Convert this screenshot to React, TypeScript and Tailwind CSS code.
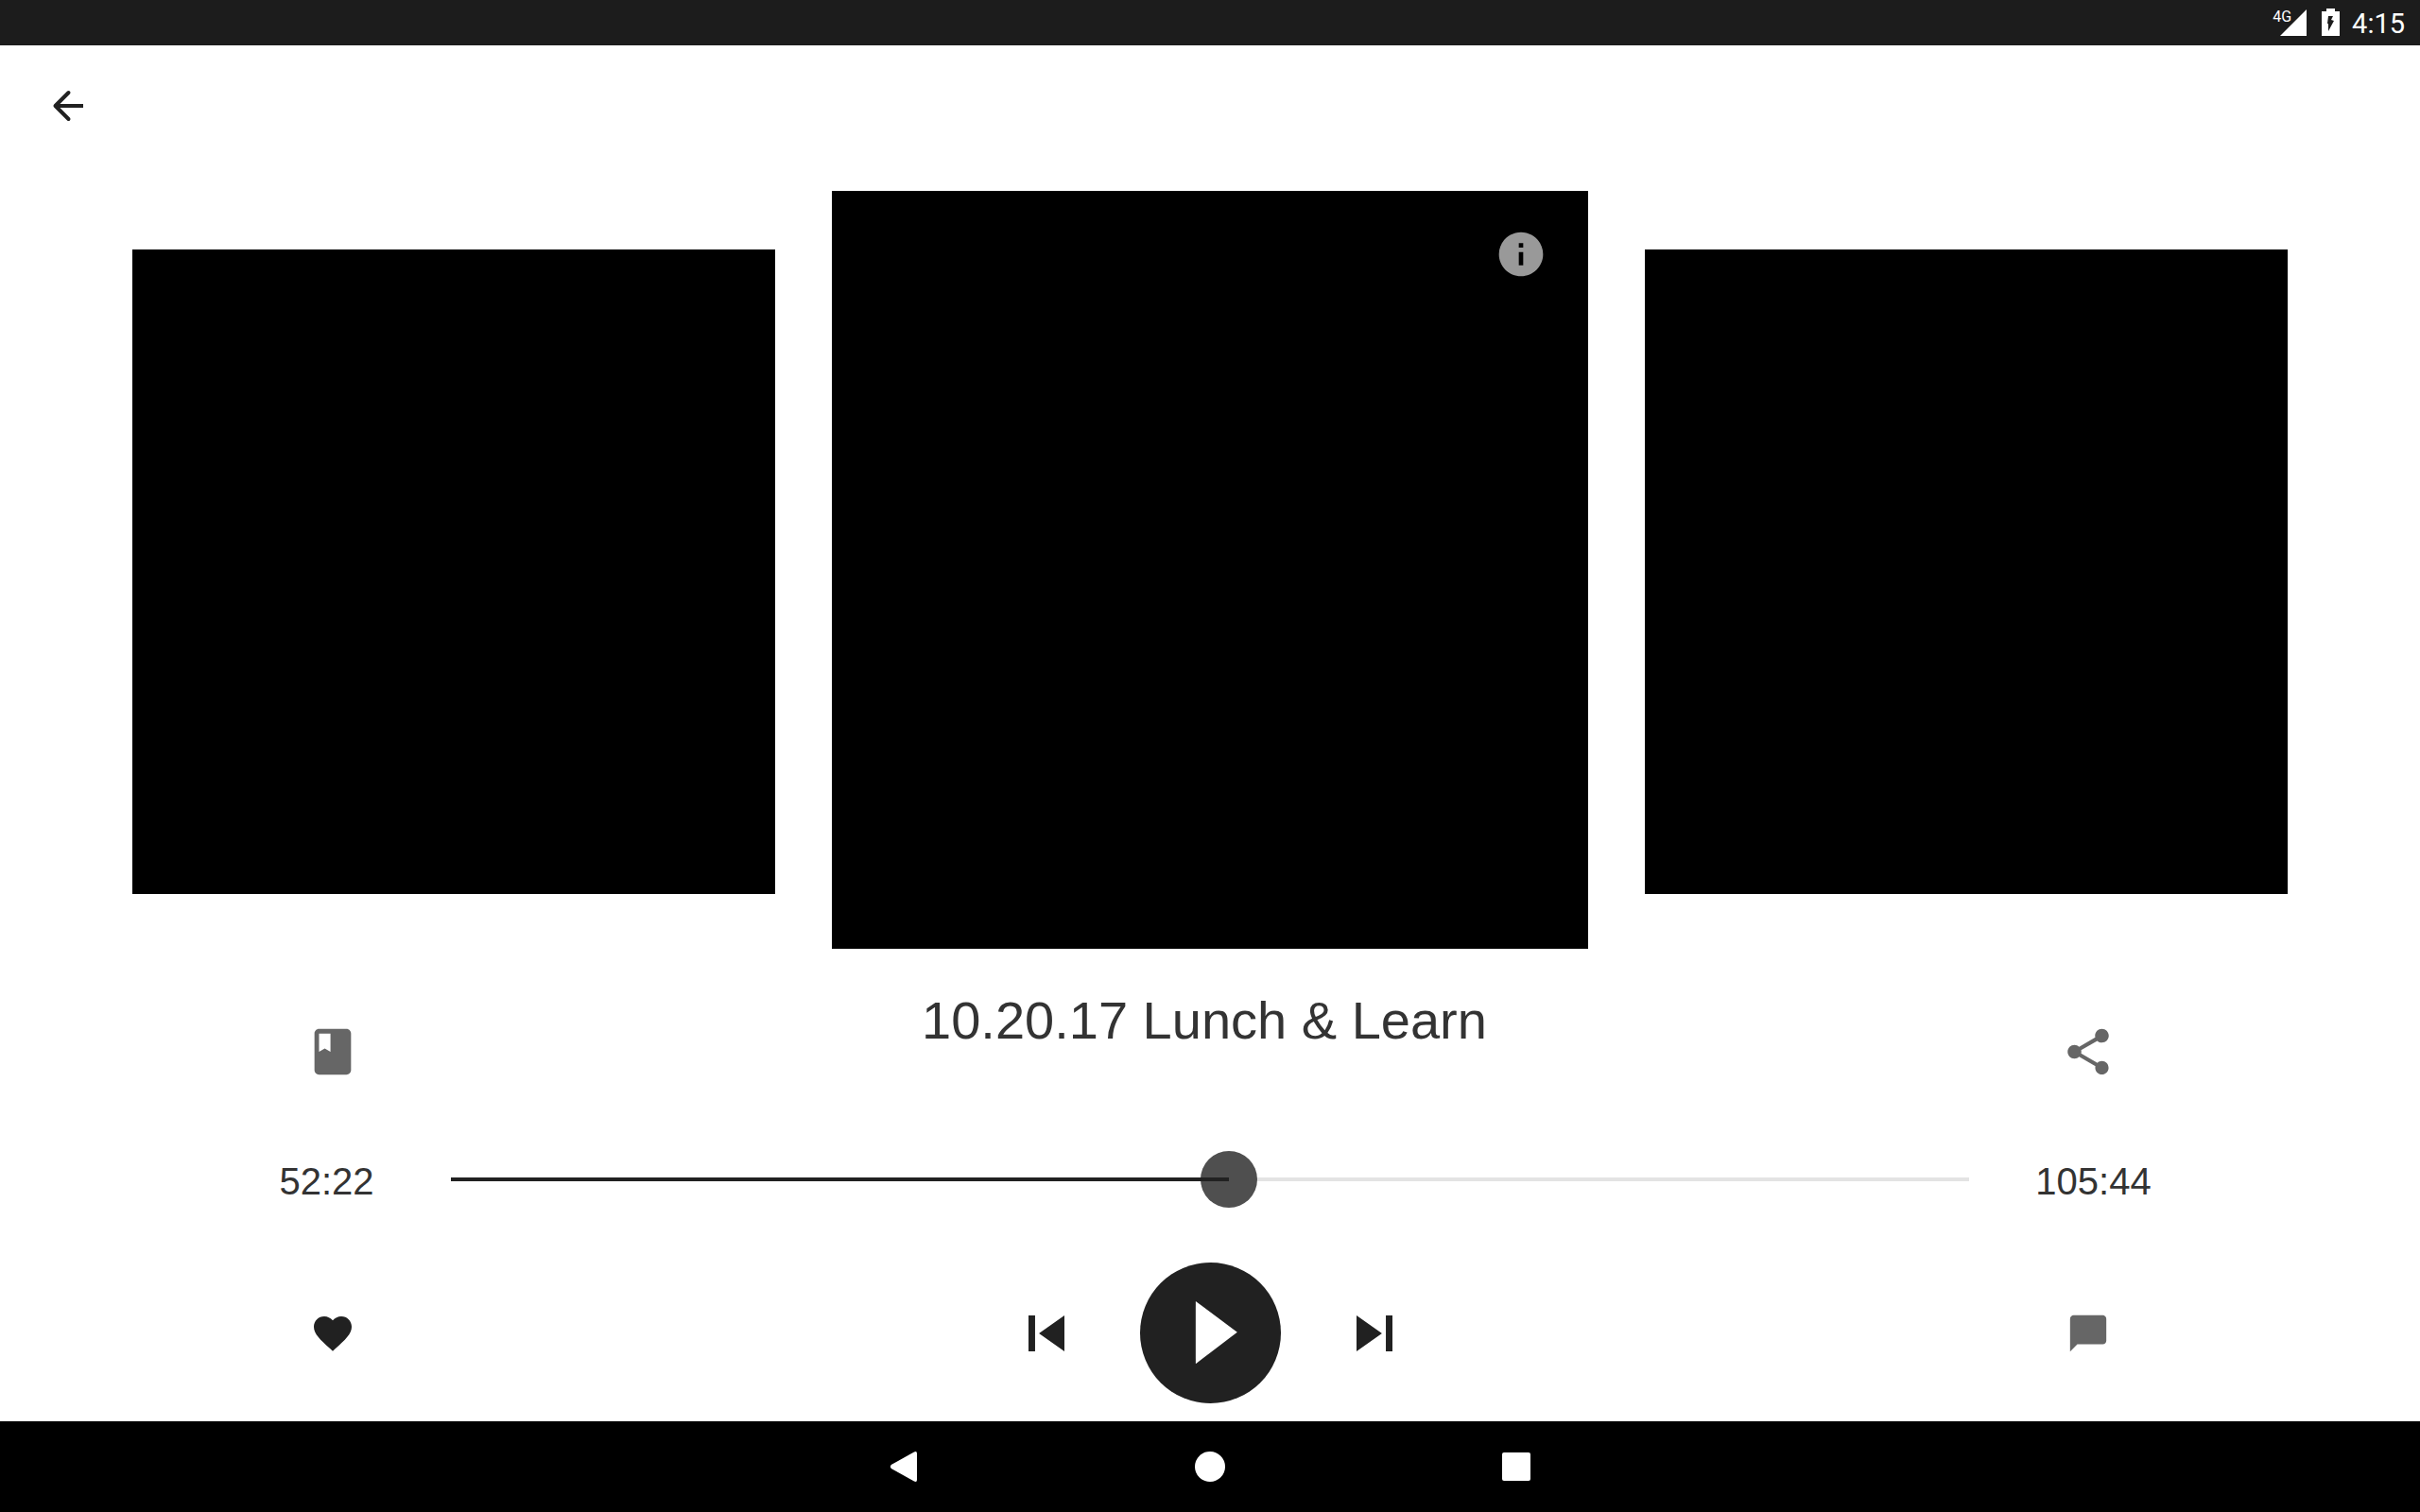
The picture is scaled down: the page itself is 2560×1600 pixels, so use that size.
import { useState } from "react";

const icons = {
  book: "M18 2H6c-1.1 0-2 .9-2 2v16c0 1.1.9 2 2 2h12c1.1 0 2-.9 2-2V4c0-1.1-.9-2-2-2zM6 4h5v8l-2.5-1.5L6 12V4z",
  share:
    "M18 16.08c-.76 0-1.44.3-1.96.77L8.91 12.7c.05-.23.09-.46.09-.7s-.04-.47-.09-.7l7.05-4.11c.54.5 1.25.81 2.04.81 1.66 0 3-1.34 3-3s-1.34-3-3-3-3 1.34-3 3c0 .24.04.47.09.7L8.04 9.81C7.5 9.31 6.79 9 6 9c-1.66 0-3 1.34-3 3s1.34 3 3 3c.79 0 1.5-.31 2.04-.81l7.12 4.16c-.05.21-.08.43-.08.65 0 1.61 1.31 2.92 2.92 2.92 1.61 0 2.92-1.31 2.92-2.92s-1.31-2.92-2.92-2.92z",
  heart:
    "M12 21.35l-1.45-1.32C5.4 15.36 2 12.28 2 8.5 2 5.42 4.42 3 7.5 3c1.74 0 3.41.81 4.5 2.09C13.09 3.81 14.76 3 16.5 3 19.58 3 22 5.42 22 8.5c0 3.78-3.4 6.86-8.55 11.54L12 21.35z",
  comment: "M20 2H4c-1.1 0-2 .9-2 2v18l4-4h14c1.1 0 2-.9 2-2V4c0-1.1-.9-2-2-2z",
  previous: "M6 6h2.2v12H6zm3.5 6l8.5 6V6z",
  next: "M6 18l8.5-6L6 6v12zM15.8 6v12H18V6h-2.2z",
  info: "M12 2C6.48 2 2 6.48 2 12s4.48 10 10 10 10-4.48 10-10S17.52 2 12 2zm1 15h-2v-6h2v6zm0-8h-2V7h2v2z",
};

function Icon({ name, className }: { name: keyof typeof icons; className: string }) {
  return (
    <svg viewBox="0 0 24 24" fill="currentColor" aria-hidden="true" className={className}>
      <path d={icons[name]} />
    </svg>
  );
}

function StatusBar() {
  return (
    <div className="flex h-12 items-center justify-end bg-[#1c1c1c] pr-4 font-[Roboto,sans-serif] text-white">
      <div className="relative mr-4 h-7 w-7">
        <svg viewBox="0 0 28 28" fill="currentColor" aria-hidden="true" className="h-7 w-7">
          <path d="M28 0v28H0z" />
        </svg>
        <span className="absolute -top-0.5 right-4 text-base leading-5">4G</span>
      </div>
      <svg viewBox="0 0 20 30" aria-hidden="true" className="mr-3 h-[30px] w-5">
        <path fill="#fff" d="M0 3h5V0h9v3h5v26H0z" />
        <path fill="#1c1c1c" d="M7 8h5l-2 4 3 1-6 11v-8H6z" />
      </svg>
      <span className="pt-0.5 text-[29px] leading-9">4:15</span>
    </div>
  );
}

function Seek() {
  const [value, setValue] = useState(513);
  const pct = value / 10;
  return (
    <input
      type="range"
      aria-label="Playback position"
      min={0}
      max={1000}
      value={value}
      onChange={(e) => setValue(Number(e.target.value))}
      style={{ backgroundImage: `linear-gradient(to right, #212121 ${pct}%, #e3e3e3 ${pct}%)` }}
      className="block h-[60px] w-full appearance-none bg-[length:100%_4px] bg-center bg-no-repeat [&::-webkit-slider-thumb]:h-[60px] [&::-webkit-slider-thumb]:w-[60px] [&::-webkit-slider-thumb]:appearance-none [&::-webkit-slider-thumb]:rounded-full [&::-webkit-slider-thumb]:bg-[#4f4f4f] [&::-webkit-slider-thumb]:bg-[linear-gradient(#212121,#212121)] [&::-webkit-slider-thumb]:bg-[length:30px_4px] [&::-webkit-slider-thumb]:bg-left [&::-webkit-slider-thumb]:bg-no-repeat"
    />
  );
}

function NavBar() {
  return (
    <nav className="flex h-24 items-center justify-center gap-[292px] bg-black text-white">
      <button aria-label="Back" className="h-8 w-8">
        <svg viewBox="0 0 32 32" fill="currentColor" className="h-8 w-8">
          <path d="M2.8 14 27 .5Q30-.8 30 2v28q0 2.800-3 1.500L2.800 18Q1 16 2.800 14z" />
        </svg>
      </button>
      <button aria-label="Home" className="h-8 w-8 rounded-full bg-white" />
      <button aria-label="Recent apps" className="flex h-8 w-8 items-center justify-center">
        <span className="h-[30px] w-[30px] rounded-xs bg-white" />
      </button>
    </nav>
  );
}

export default function App() {
  return (
    <div className="flex min-h-screen flex-col bg-white font-['Liberation_Sans',Arial,sans-serif] text-[#333]">
      <StatusBar />
      <header className="flex h-32 items-center px-12">
        <button aria-label="Navigate up" className="text-[#212121]">
          <svg
            viewBox="0 0 48 48"
            fill="none"
            stroke="currentColor"
            strokeWidth="4"
            strokeLinejoin="round"
            className="h-12 w-12"
          >
            <path d="M40 24H11" />
            <path strokeLinecap="round" d="M24.500 10 10.500 24l14 14" />
          </svg>
        </button>
      </header>

      <main className="flex-1">
        <div className="mt-[26px] grid grid-cols-[17fr_20fr_17fr] items-center gap-[60px] px-[140px]">
          <div className="mt-1 aspect-[340/341] bg-black" />
          <div className="relative aspect-[400/401] bg-black">
            <button aria-label="Info" className="absolute top-[39px] right-[43px] text-[#999]">
              <Icon name="info" className="h-14 w-14" />
            </button>
          </div>
          <div className="mt-1 aspect-[340/341] bg-black" />
        </div>

        <div className="grid grid-cols-[251px_1fr_251px] items-center justify-items-center px-[226px]">
          <button aria-label="Bookmarks" className="mt-20 text-[#666]">
            <Icon name="book" className="h-[58px] w-[58px]" />
          </button>
          <h1 className="mt-3.5 pr-3 text-[56px] leading-16">10.20.17 Lunch &amp; Learn</h1>
          <button aria-label="Share" className="mt-20 text-[#666]">
            <Icon name="share" className="h-[58px] w-[58px]" />
          </button>
        </div>

        <div className="mt-[76px] grid grid-cols-[251px_1fr_251px] items-center px-[226px]">
          <span className="pt-1 pr-3 text-center text-[40px] leading-12">52:22</span>
          <Seek />
          <span className="pt-1 pl-3 text-center text-[40px] leading-12">105:44</span>
        </div>

        <div className="mt-[58px] grid grid-cols-[251px_1fr_251px] items-center justify-items-center px-[226px]">
          <button aria-label="Favorite" className="text-[#212121]">
            <Icon name="heart" className="h-12 w-12" />
          </button>
          <div className="flex items-center gap-[61px] text-[#212121]">
            <button aria-label="Previous">
              <Icon name="previous" className="h-[76px] w-[76px]" />
            </button>
            <button aria-label="Play">
              <svg viewBox="2 2 20 20" className="h-[149px] w-[149px]">
                <circle cx="12" cy="12" r="10" fill="currentColor" />
                <path fill="#fff" d="M9.900 16.400V7.500l5.900 4.400z" />
              </svg>
            </button>
            <button aria-label="Next">
              <Icon name="next" className="h-[76px] w-[76px]" />
            </button>
          </div>
          <button aria-label="Comments" className="text-[#666]">
            <Icon name="comment" className="h-[46px] w-[46px]" />
          </button>
        </div>
      </main>

      <NavBar />
    </div>
  );
}
